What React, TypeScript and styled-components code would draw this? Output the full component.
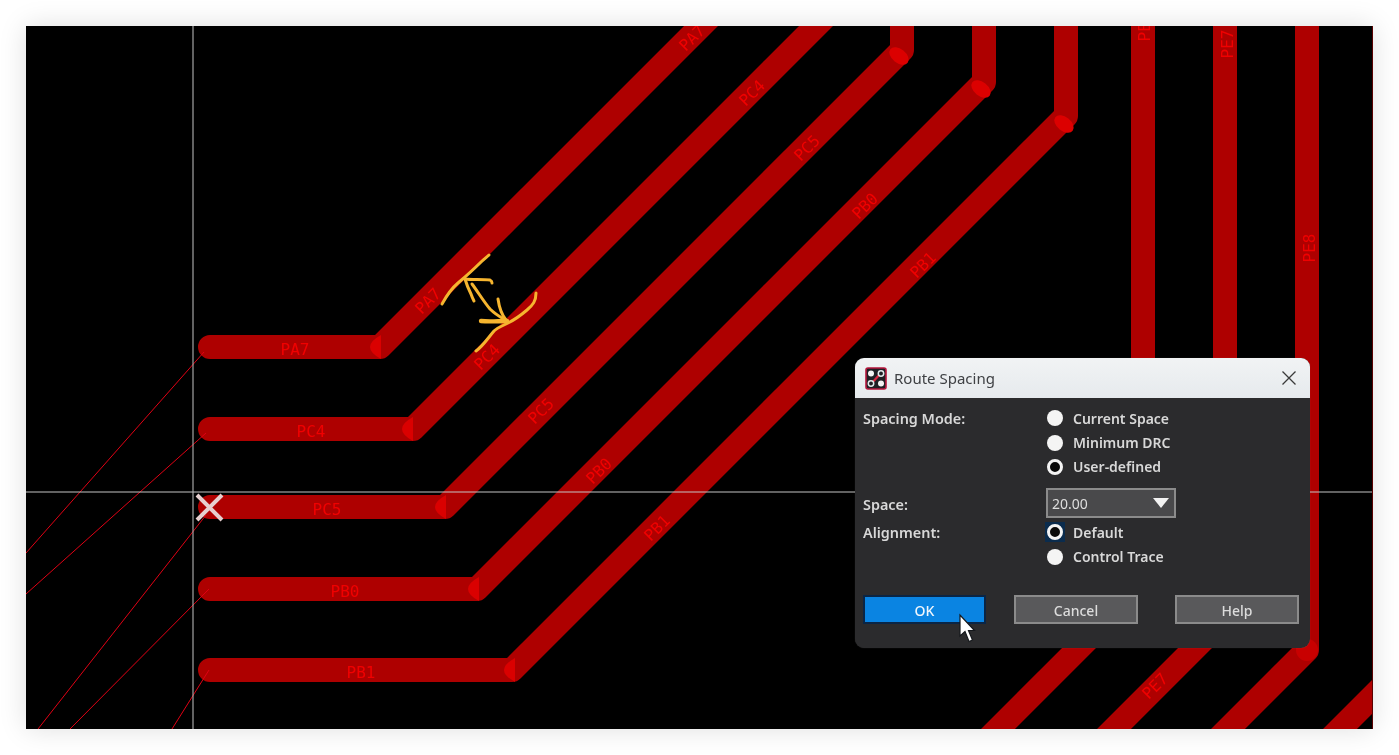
import React from 'react';
import styled, { createGlobalStyle } from 'styled-components';

const GlobalStyle = createGlobalStyle`
  html, body {
    margin: 0;
    padding: 0;
    background: #fff;
  }
  body {
    font-family: "Noto Sans", "Open Sans", "Liberation Sans", sans-serif;
  }
`;

const Page = styled.div`
  width: 1399px;
  height: 755px;
  padding: 26px;
  box-sizing: border-box;
  overflow: hidden;
`;

const Canvas = styled.div`
  position: relative;
  width: 1347px;
  height: 703px;
  background: #000;
  box-shadow: 0 0 26px rgba(0, 0, 0, 0.13);
`;

const Board = styled.svg`
  display: block;
  width: 100%;
  height: 100%;
  filter: blur(0.4px);
`;

const Dialog = styled.div`
  position: absolute;
  left: 829px;
  top: 332px;
  width: 455px;
  height: 290px;
  border-radius: 9px;
  overflow: hidden;
  background: #2b2b2d;
  box-shadow: 0 0 1px rgba(255, 255, 255, 0.2);
  filter: blur(0.3px);
`;

const TitleBar = styled.div`
  display: flex;
  align-items: center;
  height: 40px;
  padding: 0 14px 0 10px;
  background: linear-gradient(#f1f3f4, #e6eaed);
  color: #3f4144;
  font-size: 15px;
`;

const TitleText = styled.span`
  margin-left: 7px;
  flex: 1;
`;

const DialogBody = styled.div`
  padding: 8px 11px 0 8px;
`;

const Form = styled.div`
  display: grid;
  grid-template-columns: 183px 1fr;
  row-gap: 9px;
`;

const Label = styled.div`
  height: 24px;
  line-height: 26px;
  font-size: 14.4px;
  font-weight: 600;
  color: #d8d8d8;
`;

const SpaceLabel = styled(Label)`
  height: 30px;
  line-height: 34px;
  margin-bottom: -7px;
`;

const RadioGroup = styled.div`
  display: flex;
  flex-direction: column;
`;

const RadioRow = styled.div`
  display: flex;
  align-items: center;
  height: 24.4px;
  padding-left: 1px;
  font-size: 14px;
  font-weight: 600;
  color: #d8d8d8;
`;

const RadioText = styled.span`
  margin-left: 1px;
`;

const RadioFocus = styled.span<{ $focused?: boolean }>`
  display: flex;
  align-items: center;
  justify-content: center;
  width: 20px;
  height: 20px;
  margin: 0 7px 0 -2px;
  background: ${(p) => (p.$focused ? '#0b2c4d' : 'transparent')};
`;

const RadioDot = styled.span<{ $checked?: boolean }>`
  display: block;
  box-sizing: border-box;
  width: 16px;
  height: 16px;
  border-radius: 50%;
  background: ${(p) => (p.$checked ? '#0a0a0a' : '#f4f4f4')};
  border: ${(p) => (p.$checked ? '3px solid #f4f4f4' : 'none')};
`;

const Select = styled.div`
  display: flex;
  align-items: center;
  justify-content: space-between;
  box-sizing: border-box;
  width: 130px;
  height: 30px;
  padding: 0 5px 0 4px;
  margin-bottom: -7px;
  background: #49494b;
  border: 2px solid #8b8b8b;
  font-size: 14px;
  color: #dedede;
`;

const Caret = styled.span`
  width: 0;
  height: 0;
  margin-bottom: 1px;
  border-left: 8px solid transparent;
  border-right: 8px solid transparent;
  border-top: 10px solid #f2f2f2;
`;

const ButtonRow = styled.div`
  display: flex;
  gap: 28px;
  margin-top: 26px;
`;

const Button = styled.div<{ $primary?: boolean }>`
  display: flex;
  align-items: center;
  justify-content: center;
  box-sizing: border-box;
  width: ${(p) => (p.$primary ? '123px' : '124px')};
  height: 29px;
  padding-top: 2px;
  font-size: 14px;
  font-weight: 500;
  color: ${(p) => (p.$primary ? '#f0f6fc' : '#dcdcdc')};
  background: ${(p) => (p.$primary ? '#0a84e2' : '#59595b')};
  border: 2px solid ${(p) => (p.$primary ? '#0a2545' : '#8b8b8b')};
`;

const HelpButton = styled(Button)`
  margin-left: auto;
`;

const Pointer = styled.svg`
  position: absolute;
  left: 933px;
  top: 588px;
  overflow: visible;
`;

const traceColor = '#ae0000';
const labelColor = '#f00000';

const traces = [
  'M210 347 H380 L720 7',
  'M210 429 H413 L835 7',
  'M210 507 H445 L902 50 V7',
  'M210 589 H477 L984 82 V7',
  'M210 670 H512 L1066 116 V7',
  'M1143 7 V584 L978 749',
  'M1225 7 V618 L1094 749',
  'M1307 7 V650 L1208 749',
  'M1383 686 L1320 749',
];

const ratsnest = [
  'M26 553 L204 352',
  'M26 594 L206 433',
  'M38 729 L206 515',
  'M70 729 L209 589',
  'M172 729 L209 670',
];

const labels = [
  { text: 'PA7', x: 295, y: 349, angle: 0 },
  { text: 'PC4', x: 311, y: 431, angle: 0 },
  { text: 'PC5', x: 327, y: 509, angle: 0 },
  { text: 'PB0', x: 345, y: 591, angle: 0 },
  { text: 'PB1', x: 361, y: 672, angle: 0 },
  { text: 'PA7', x: 428, y: 301, angle: -45 },
  { text: 'PC4', x: 487, y: 357, angle: -45 },
  { text: 'PC5', x: 541, y: 411, angle: -45 },
  { text: 'PB0', x: 599, y: 471, angle: -45 },
  { text: 'PB1', x: 657, y: 528, angle: -45 },
  { text: 'PA7', x: 692, y: 38, angle: -45 },
  { text: 'PC4', x: 752, y: 93, angle: -45 },
  { text: 'PC5', x: 807, y: 148, angle: -45 },
  { text: 'PB0', x: 865, y: 206, angle: -45 },
  { text: 'PB1', x: 923, y: 265, angle: -45 },
  { text: 'PE6', x: 1144, y: 27, angle: -90 },
  { text: 'PE7', x: 1227, y: 44, angle: -90 },
  { text: 'PE8', x: 1309, y: 248, angle: -90 },
  { text: 'PE7', x: 1155, y: 686, angle: -45 },
];

// bright spots where two segments of a trace overlap
const flatBends = [381, 413, 446, 479, 515];
const flatBendY = [347, 429, 507, 589, 670];
const steepBends = [
  [899, 56],
  [981, 89],
  [1064, 124],
];

const scribbles = [
  { d: 'M442 304 C447 295 452 288 458 283 C465 277 474 269 480 263 C484 259 487 257 489 255', w: 3 },
  { d: 'M465 279 C472 280 482 279 490 280 C492 281 492 282 492 283', w: 3 },
  { d: 'M465 279 C467 286 469 290 471 294 C472 297 473 299 474 301', w: 3 },
  { d: 'M472 284 C478 292 484 302 490 309 C496 315 502 318 507 321', w: 3 },
  { d: 'M481 321 C490 322 498 321 507 321', w: 4.4 },
  { d: 'M498 299 C499 306 501 314 506 320', w: 3 },
  { d: 'M536 293 C536 301 533 305 527 310 C520 316 514 320 508 323 C502 326 497 328 494 331 C488 338 483 346 476 351', w: 3 },
];

const AppIcon = () => (
  <svg width="22" height="23" viewBox="0 0 22 23">
    <rect x="1" y="1" width="20" height="21" rx="2" fill="#1f1f24" stroke="#b5163c" strokeWidth="1.6" />
    <path d="M7 16 L15 7" stroke="#d8243f" strokeWidth="2.2" />
    <circle cx="6" cy="6.5" r="3" fill="#f2f2f2" />
    <circle cx="16" cy="6.5" r="2.7" fill="#1f1f24" stroke="#dfe8ea" strokeWidth="1.5" />
    <circle cx="6" cy="16.5" r="2.7" fill="#1f1f24" stroke="#dfe8ea" strokeWidth="1.5" />
    <circle cx="16" cy="16.5" r="3" fill="#f2f2f2" />
  </svg>
);

const CloseIcon = () => (
  <svg width="14" height="14" viewBox="0 0 14 14">
    <path d="M0.5 0.5 L13.5 13.5 M13.5 0.5 L0.5 13.5" stroke="#3a3a3a" strokeWidth="1.3" />
  </svg>
);

const Radio: React.FunctionComponent<{ label: string; checked?: boolean; focused?: boolean }> = ({
  label,
  checked,
  focused,
}) => (
  <RadioRow>
    <RadioFocus $focused={focused}>
      <RadioDot $checked={checked} />
    </RadioFocus>
    <RadioText>{label}</RadioText>
  </RadioRow>
);

export const App: React.FunctionComponent = () => (
  <Page>
    <GlobalStyle />
    <Canvas>
      <Board viewBox="26 26 1347 703">
        {traces.map((d) => (
          <path
            key={d}
            d={d}
            fill="none"
            stroke={traceColor}
            strokeWidth={24}
            strokeLinecap="round"
            strokeLinejoin="round"
          />
        ))}

        {flatBends.map((x, i) => (
          <path
            key={x}
            d={`M${x} ${flatBendY[i] - 12} Q${x - 22} ${flatBendY[i]} ${x} ${flatBendY[i] + 12} Z`}
            fill="#da0000"
          />
        ))}
        {steepBends.map(([x, y]) => (
          <ellipse key={x} cx={x} cy={y} rx={11} ry={7} fill="#dc0000" transform={`rotate(38 ${x} ${y})`} />
        ))}
        <circle cx={1307} cy={650} r={11} fill="#c80000" />

        {labels.map((l) => (
          <text
            key={`${l.text}-${l.x}`}
            x={l.x}
            y={l.y}
            fill={labelColor}
            fontFamily="'DejaVu Sans Mono', monospace"
            fontSize={16}
            textAnchor="middle"
            dominantBaseline="central"
            transform={`rotate(${l.angle} ${l.x} ${l.y})`}
          >
            {l.text}
          </text>
        ))}

        {ratsnest.map((d) => (
          <path key={d} d={d} fill="none" stroke="#e00014" strokeWidth={1} />
        ))}

        <path d="M193 26 V729 M26 492 H1373" stroke="#c4c4c4" strokeWidth={1} />
        <path d="M197 495 L222 520 M222 495 L197 520" stroke="#e6cfcf" strokeWidth={4} />
        <path d="M1372.5 26 V729" stroke="#5a0000" strokeWidth={1} />

        {scribbles.map((s) => (
          <path
            key={s.d}
            d={s.d}
            fill="none"
            stroke="#f6b52f"
            strokeWidth={s.w}
            strokeLinecap="round"
            strokeLinejoin="round"
          />
        ))}
      </Board>

      <Dialog>
        <TitleBar>
          <AppIcon />
          <TitleText>Route Spacing</TitleText>
          <CloseIcon />
        </TitleBar>
        <DialogBody>
          <Form>
            <Label>Spacing Mode:</Label>
            <RadioGroup>
              <Radio label="Current Space" />
              <Radio label="Minimum DRC" />
              <Radio label="User-defined" checked />
            </RadioGroup>
            <SpaceLabel>Space:</SpaceLabel>
            <Select>
              20.00
              <Caret />
            </Select>
            <Label>Alignment:</Label>
            <RadioGroup>
              <Radio label="Default" checked focused />
              <Radio label="Control Trace" />
            </RadioGroup>
          </Form>
          <ButtonRow>
            <Button $primary>OK</Button>
            <Button>Cancel</Button>
            <HelpButton>Help</HelpButton>
          </ButtonRow>
        </DialogBody>
      </Dialog>

      <Pointer width="16" height="29" viewBox="0 0 16 29">
        <path d="M1 1 L1 22 L6 17.5 L10 27.5 L13.5 26 L9.5 16.5 L15.5 16.5 Z" fill="#fff" stroke="#15181c" strokeWidth="1.2" />
      </Pointer>
    </Canvas>
  </Page>
);

export default App;
